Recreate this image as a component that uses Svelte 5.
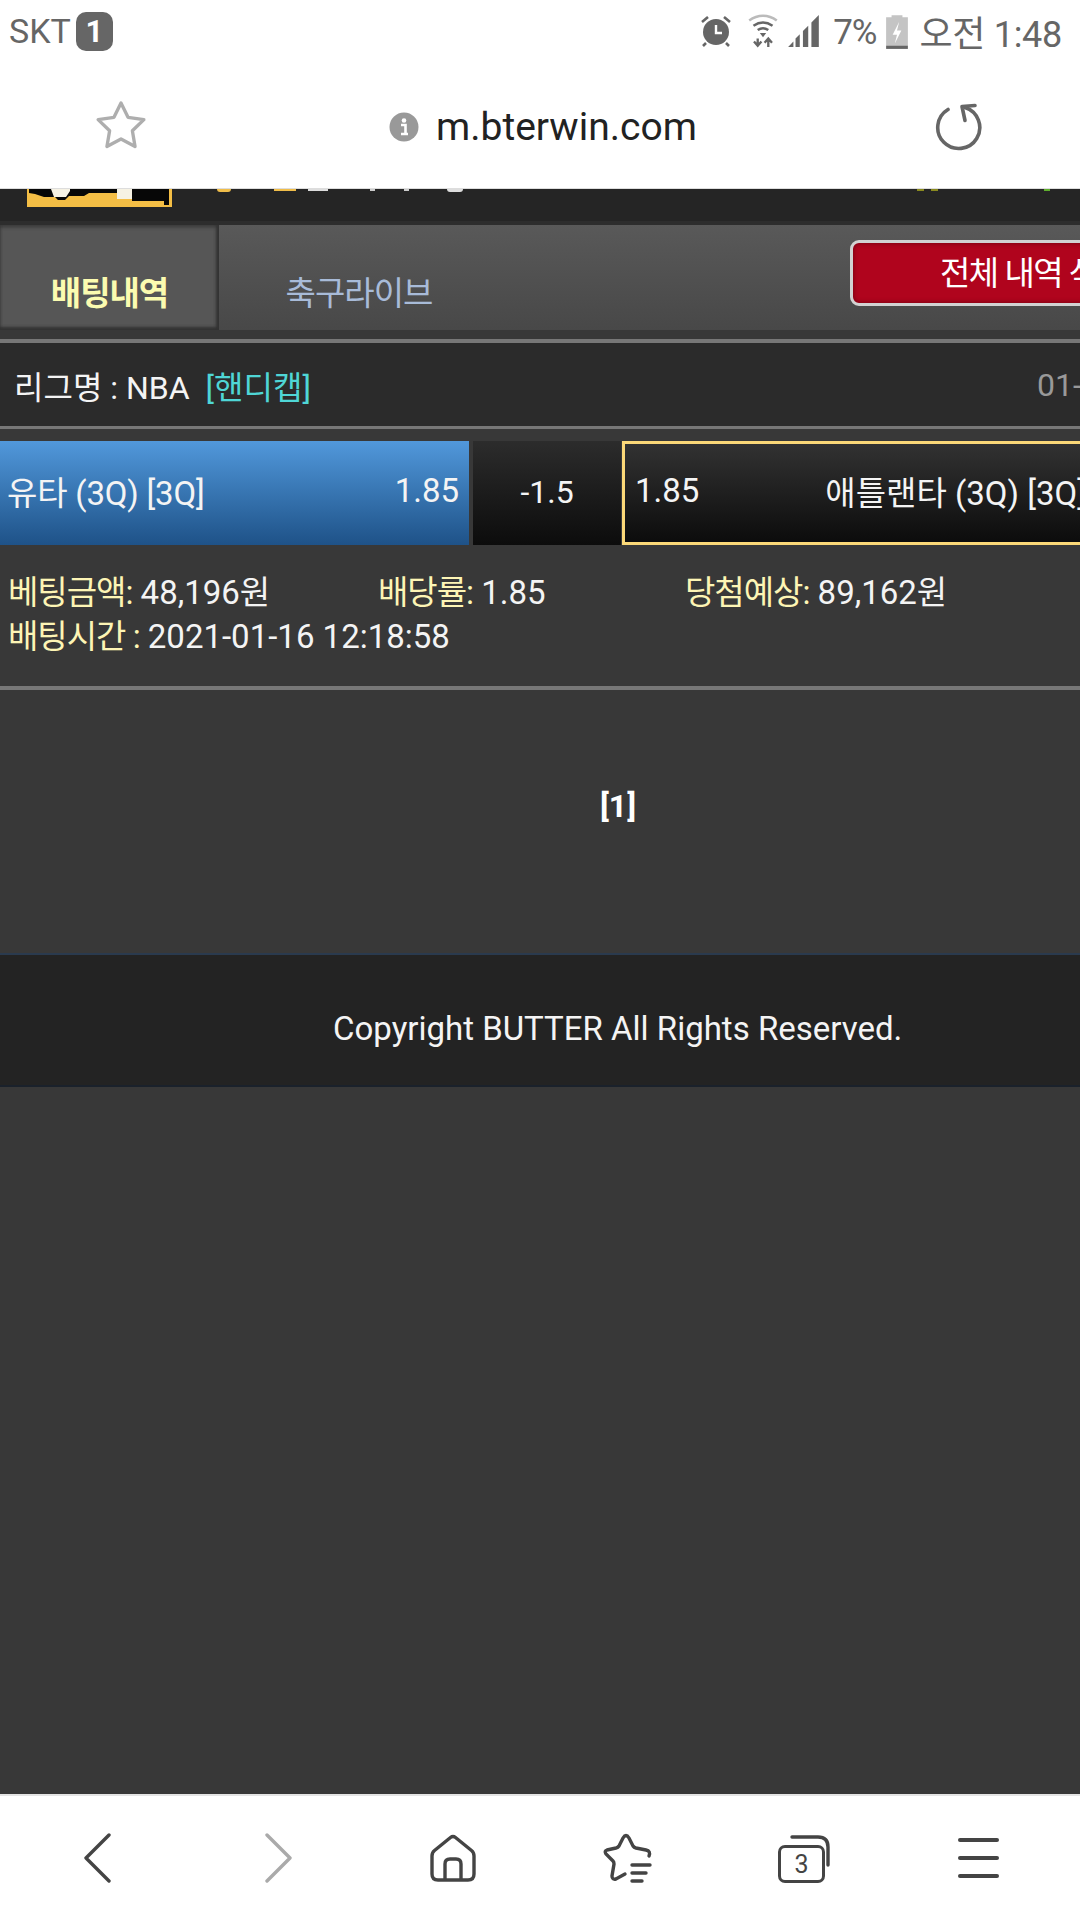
<script>
	// bits of the site title that stick out under the url bar
	const specks = [
		{ x: 217, w: 14, c: '#f0bd4a', round: true },
		{ x: 274, w: 22, c: '#f0bd4a' },
		{ x: 308, w: 20, c: '#ddd' },
		{ x: 370, w: 5, c: '#ccc' },
		{ x: 404, w: 5, c: '#ccc' },
		{ x: 447, w: 16, c: '#ddd', round: true },
		{ x: 917, w: 7, c: '#8a8a20' },
		{ x: 931, w: 7, c: '#8a8a20' },
		{ x: 1044, w: 6, c: '#5fae2e' }
	];
</script>

<div class="phone">
	<!-- status bar -->
	<div class="status">
		<div class="carrier">
			<span>SKT</span>
			<span class="sim">1</span>
		</div>
		<div class="indicators">
			<svg class="alarm" width="34" height="34" viewBox="0 0 34 34">
				<circle cx="17" cy="18" r="13" fill="#666" />
				<path d="M17 11v8h6" fill="none" stroke="#fff" stroke-width="2.4" />
				<path d="M3 8l6-5M31 8l-6-5M7 29l-3 3M27 29l3 3" stroke="#666" stroke-width="2.6" fill="none" />
			</svg>
			<svg class="wifi" width="30" height="36" viewBox="0 0 28 34">
				<path d="M1 7c8-6 18-6 26 0" fill="none" stroke="#bbb" stroke-width="2.4" />
				<path d="M5 12c6-4 12-4 18 0M9 16c3-2 7-2 10 0" fill="none" stroke="#666" stroke-width="2.4" />
				<path d="M11 19h6l-3 4z" fill="#666" />
				<path d="M9 24v6M5.500 27l3.500 4 3.500-4M19 32v-7M15.500 28l3.500-4 3.500 4" fill="none" stroke="#666" stroke-width="2.200" />
			</svg>
			<svg class="signal" width="34" height="36" viewBox="0 0 32 34">
				<path d="M1 32l5-5v5zM8 32v-8l4-4v12zM15 32V17l5-5v20zM23 32V9l7-7v30z" fill="#666" />
			</svg>
			<span class="pct">7%</span>
			<svg class="battery" width="22" height="37" viewBox="0 0 20 34">
				<path d="M5 2h10v2h5v26H0V4h5z" fill="#c4c4c4" />
				<path d="M0 30h20v3H0z" fill="#666" />
				<path d="M12 8l-6 12h4l-2 8 6-12h-4z" fill="#fff" />
			</svg>
			<span class="clock">오전 1:48</span>
		</div>
	</div>

	<!-- browser url bar -->
	<div class="urlbar">
		<svg class="fav" width="58" height="58" viewBox="0 0 52 52">
			<path
				d="M26 4.500l6.300 12.800 14.200 2.100-10.300 10 2.400 14.100L26 36.800l-12.600 6.700 2.400-14.100-10.300-10 14.200-2.100z"
				fill="none"
				stroke="#aeaeae"
				stroke-width="3"
				stroke-linejoin="round"
			/>
		</svg>
		<div class="address">
			<svg width="30" height="30" viewBox="0 0 30 30">
				<circle cx="15" cy="15" r="14.500" fill="#999" />
				<circle cx="15" cy="8.500" r="2.300" fill="#fff" />
				<path d="M12 13h4.500v9H19M12 22h5" fill="none" stroke="#fff" stroke-width="2.600" />
			</svg>
			<span>m.bterwin.com</span>
		</div>
		<svg class="reload" width="50" height="50" viewBox="0 0 50 50">
			<path d="M15 8.500A21 21 0 1 0 32 6.500" fill="none" stroke="#666" stroke-width="3.600" stroke-linecap="round" />
			<path d="M42 4.500L29 5.500l3 14" fill="none" stroke="#666" stroke-width="3.600" stroke-linecap="round" stroke-linejoin="round" />
		</svg>
	</div>

	<div class="page">
		<!-- site header, mostly scrolled under the url bar -->
		<header class="site">
			<svg class="logo" width="145" height="18" viewBox="0 0 145 18">
				<rect width="145" height="18" fill="#f4be45" />
				<path d="M2 0V4L8 5L17 8H28L31 11H38L42 7H57L62 4H90V9H105V12H137V16H142V0Z" fill="#070707" />
				<path d="M24 0L27 8H39L43 2V0ZM90 0V10H105V0Z" fill="#f6f2e4" />
			</svg>
			{#each specks as s}
				<i class="speck" class:round={s.round} style="left:{s.x}px;width:{s.w}px;background:{s.c}"></i>
			{/each}
		</header>

		<!-- tabs -->
		<div class="tabs">
			<div class="tab active">배팅내역</div>
			<div class="tab">축구라이브</div>
			<button class="delete-all">전체 내역 삭제</button>
		</div>

		<!-- bet history item -->
		<div class="league">
			<span>리그명 : NBA</span>
			<span class="handicap">[핸디캡]</span>
			<span class="date">01-16 09:05</span>
		</div>

		<div class="bet">
			<div class="match">
				<div class="team home">
					<span class="home-name">유타 (3Q) [3Q]</span>
					<span>1.85</span>
				</div>
				<div class="line">-1.5</div>
				<div class="team away">
					<span>1.85</span>
					<span class="away-name">애틀랜타 (3Q) [3Q]</span>
				</div>
			</div>
			<div class="details">
				<div class="detail-row">
					<span class="c1"><b>베팅금액:</b> 48,196원</span>
					<span class="c2"><b>배당률:</b> 1.85</span>
					<span><b>당첨예상:</b> 89,162원</span>
				</div>
				<div class="detail-row">
					<span><b>배팅시간 :</b> 2021-01-16 12:18:58</span>
				</div>
			</div>
		</div>

		<div class="pager"><strong>[1]</strong></div>

		<footer class="copy">Copyright BUTTER All Rights Reserved.</footer>
	</div>

	<!-- browser bottom bar -->
	<nav class="bottom">
		<svg class="back" width="30" height="50" viewBox="0 0 30 50">
			<path d="M26 2L3 25l23 23" fill="none" stroke="#444" stroke-width="3.400" stroke-linecap="round" stroke-linejoin="round" />
		</svg>
		<svg class="fwd" width="30" height="50" viewBox="0 0 30 50">
			<path d="M3 2l23 23L3 48" fill="none" stroke="#aaa" stroke-width="3.400" stroke-linecap="round" stroke-linejoin="round" />
		</svg>
		<svg class="home-icon" width="46" height="48" viewBox="0 0 46 48">
			<path
				d="M20.500 3.500L4.500 16.500Q2 18.500 2 22v18q0 6 6 6h30q6 0 6-6V22q0-3.500-2.500-5.500L25.500 3.500q-2.500-2-5 0z"
				fill="none"
				stroke="#444"
				stroke-width="3.400"
			/>
			<path d="M15 46V30q0-5 5-5h6q5 0 5 5v16" fill="none" stroke="#444" stroke-width="3.400" />
		</svg>
		<svg class="favlist" width="50" height="50" viewBox="0 0 50 50">
			<path
				d="M46 23q2-5-3-6l-10-2q-2-.5-3-2L26 5q-3-5-6 0l-4 8q-1 1.500-3 2L4 17q-3 1-1 4l7 7q1 1 1 3l-2 12q0 4 4 3l9-5"
				fill="none"
				stroke="#444"
				stroke-width="3.400"
				stroke-linecap="round"
			/>
			<path d="M29 32h18M29 40h14M29 48h10" fill="none" stroke="#444" stroke-width="3.400" stroke-linecap="round" />
		</svg>
		<div class="tabs-btn">
			<span class="tabs-count">3</span>
			<svg width="52" height="46" viewBox="0 0 52 46">
				<path d="M14 2h26q10 0 10 10v18" fill="none" stroke="#444" stroke-width="3.400" stroke-linecap="round" />
			</svg>
		</div>
		<div class="menu"><i></i><i></i><i></i></div>
	</nav>
</div>

<style>
	:global(body) {
		margin: 0;
		background: #383838;
	}

	.phone {
		width: 1080px;
		height: 1920px;
		display: flex;
		flex-direction: column;
		overflow: hidden;
		font-family: Roboto, 'Noto Sans CJK KR', sans-serif;
	}

	/* status bar */
	.status {
		height: 62px;
		flex: none;
		background: #fff;
		display: flex;
		justify-content: space-between;
		align-items: center;
		padding: 0 18px 0 9px;
		color: #666;
	}

	.carrier {
		display: flex;
		align-items: center;
		gap: 5px;
		font-size: 34px;
	}

	.sim {
		width: 37px;
		height: 39px;
		background: #666;
		border-radius: 10px;
		color: #fff;
		font-size: 31px;
		font-weight: 700;
		text-align: center;
		line-height: 39px;
	}

	.indicators {
		display: flex;
		align-items: center;
	}

	.wifi {
		margin-left: 15px;
	}

	.signal {
		margin-left: 9px;
	}

	.pct {
		font-size: 35px;
		line-height: 40px;
		margin: 4px 0 0 12px;
		letter-spacing: -1px;
	}

	.battery {
		margin-left: 9px;
	}

	.clock {
		font-size: 36px;
		margin-left: 12px;
		letter-spacing: -0.3px;
	}

	/* url bar */
	.urlbar {
		height: 126px;
		box-sizing: border-box;
		flex: none;
		background: #fff;
		padding-top: 4px;
		display: flex;
		align-items: center;
	}

	.fav {
		margin-left: 92px;
	}

	.address {
		display: flex;
		align-items: center;
		gap: 17px;
		margin-left: 239px;
		font-size: 39px;
		color: #222;
	}

	.reload {
		margin: 0 0 2px 236px;
	}

	/* page */
	.page {
		flex: 1;
		background: #383838;
		color: #f4f4f4;
		min-height: 0;
		border-top: 1px solid #ddd;
	}

	.site {
		height: 32px;
		background: #252525;
		border-bottom: 4px solid #2d2d2d;
		position: relative;
	}

	.logo {
		display: block;
		margin-left: 27px;
	}

	.speck {
		position: absolute;
		top: 0;
		height: 2px;
	}

	.speck.round {
		height: 3px;
		border-radius: 0 0 8px 8px;
	}

	.tabs {
		height: 105px;
		margin-bottom: 9px;
		display: flex;
		background: linear-gradient(#595959, #484848);
		position: relative;
	}

	.tab {
		width: 285px;
		box-sizing: border-box;
		padding: 49px 5px 0 0;
		font-size: 33px;
		line-height: 40px;
		color: #a8bbd8;
		text-align: center;
		letter-spacing: -1px;
	}

	.tab.active {
		width: 219px;
		padding: 49px 0 0;
		color: #fbfbb0;
		font-weight: 700;
		background: #565656;
		box-shadow: inset -3px 0 3px #333, inset 0 -3px 3px #333, inset 0 3px 3px #444;
	}

	.delete-all {
		position: absolute;
		left: 850px;
		top: 15px;
		width: 340px;
		height: 66px;
		background: #b0041d;
		border: 3px solid #d2d2d2;
		border-radius: 9px;
		box-shadow: inset 0 0 5px #6d0010;
		color: #fff;
		font-family: inherit;
		font-size: 33px;
		letter-spacing: -1.5px;
		text-align: left;
		padding: 0 0 5px 87px;
		white-space: nowrap;
	}

	.league {
		height: 83px;
		background: #2b2b2b;
		border-top: 4px solid #777;
		border-bottom: 3px solid #777;
		display: flex;
		align-items: center;
		font-size: 32px;
		padding-left: 14px;
		position: relative;
		white-space: nowrap;
	}

	.handicap {
		color: #4fd6d6;
		margin-left: 16px;
	}

	.date {
		position: absolute;
		left: 1037px;
		color: #999;
	}

	.bet {
		padding-top: 12px;
		border-bottom: 4px solid #777;
		height: 245px;
	}

	.match {
		display: flex;
		height: 104px;
		font-size: 33px;
		white-space: nowrap;
	}

	.team {
		display: flex;
		align-items: center;
		flex: none;
		box-sizing: border-box;
	}

	.home {
		width: 469px;
		justify-content: space-between;
		background: linear-gradient(#5198db, #1e5288);
		padding: 0 10px 5px 7px;
	}

	.home-name {
		letter-spacing: -0.2px;
	}

	.line {
		width: 148px;
		margin: 0 1px 0 4px;
		flex: none;
		box-sizing: border-box;
		padding-bottom: 2px;
		background: linear-gradient(#2c2c2c, #0c0c0c);
		display: flex;
		align-items: center;
		justify-content: center;
		font-size: 32px;
	}

	.away {
		width: 520px;
		background: linear-gradient(#323232, #0c0c0c);
		border: 3px solid #fbd878;
		padding: 0 0 5px 10px;
	}

	.away-name {
		margin-left: 126px;
	}

	.details {
		padding: 26px 0 0 8px;
		font-size: 33px;
		line-height: 44px;
	}

	.details b {
		font-weight: 400;
		color: #fdf5b5;
		letter-spacing: -1px;
	}

	.detail-row {
		display: flex;
		white-space: nowrap;
	}

	.c1 {
		width: 370px;
	}

	.c2 {
		width: 307px;
	}

	.pager {
		height: 263px;
		box-sizing: border-box;
		padding: 96px 0 0 600px;
		font-size: 32px;
		line-height: 40px;
		color: #fff;
	}

	.copy {
		height: 75px;
		background: #232323;
		border-top: 2px solid #2a3a4e;
		border-bottom: 2px solid #1a212b;
		padding: 55px 0 0 333px;
		font-size: 33px;
		line-height: 38px;
		white-space: nowrap;
	}

	/* bottom bar */
	.bottom {
		height: 124px;
		flex: none;
		background: #fff;
		border-top: 2px solid #e4e4e4;
		display: flex;
		align-items: center;
	}

	.back {
		margin-left: 83px;
	}

	.fwd {
		margin-left: 151px;
	}

	.home-icon {
		margin-left: 136px;
	}

	.favlist {
		margin-left: 127px;
	}

	.tabs-btn {
		margin-left: 125px;
		width: 52px;
		height: 46px;
		position: relative;
	}

	.tabs-btn svg {
		display: block;
	}

	.tabs-count {
		position: absolute;
		left: 0;
		top: 10px;
		width: 41px;
		height: 32px;
		border: 3.400px solid #444;
		border-radius: 7px;
		color: #444;
		font-size: 25px;
		line-height: 33px;
		text-align: center;
	}

	.menu {
		margin-left: 128px;
		width: 41px;
		display: flex;
		flex-direction: column;
		gap: 14px;
	}

	.menu i {
		height: 4px;
		background: #444;
		border-radius: 2px;
	}
</style>
